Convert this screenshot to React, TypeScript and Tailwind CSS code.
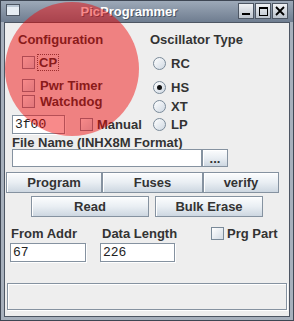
const lbl = "font-['Liberation_Sans',Arial,sans-serif] font-bold text-[13px] text-[#333] leading-[15px] whitespace-nowrap";
const mono = "font-['Liberation_Mono','DejaVu_Sans_Mono',monospace] text-[13px] text-[#222] leading-[17px]";

function Check() {
  return <span className="block w-[13px] h-[13px] shrink-0 border border-[#7a8a99] bg-linear-to-br from-white to-[#d3dbe4]" />;
}

function Radio({ on }: { on?: boolean }) {
  return (
    <span className="flex items-center justify-center w-[13px] h-[13px] shrink-0 rounded-full border border-[#7a8a99] bg-linear-to-br from-white to-[#cfd8e2]">
      {on && <span className="block w-[5px] h-[5px] rounded-full bg-[#111]" />}
    </span>
  );
}

function Btn({ text, w, h = 21 }: { text: string; w: string; h?: number }) {
  return (
    <div
      className={`${w} flex items-center justify-center border border-[#8592a0] bg-linear-to-b from-[#fcfdfe] via-[#e9eef3] to-[#cdd7e1] shadow-[inset_1px_1px_0_#fff] ${lbl}`}
      style={{ height: h }}
    >
      {text}
    </div>
  );
}

function Field({ value, w }: { value: string; w: string }) {
  return (
    <div className={`${w} h-[19px] bg-white border border-[#8592a0] shadow-[1px_1px_0_#fff] pl-[2px] ${mono}`}>{value}</div>
  );
}

export default function App() {
  return (
    <div className="relative w-[294px] h-[321px] overflow-hidden">
      <div className="flex flex-col w-full h-full border border-[#3e4653] bg-[#a7b0bc]">
        {/* title bar */}
        <div className="flex h-[21px] shrink-0 bg-linear-to-b from-[#9da9b8] to-[#6f7d90]">
          <div className="ml-[5px] mt-[3px] w-[14px] h-[12px] border border-[#4d5663] bg-[#e6edf4] shadow-[inset_0_2px_0_#b9c6d4]" />
          <div className="flex-1 text-center font-['Liberation_Sans',Arial,sans-serif] font-bold text-[13px] leading-[21px] text-white [text-shadow:1px_1px_0_#4a5565]">
            PicProgrammer
          </div>
          <div className="flex gap-[1px] mt-[2px] mr-[5px]">
            <div className="relative w-[16px] h-[16px] border border-[#4d5663] bg-linear-to-b from-[#f0f2f5] to-[#bcc4ce]">
              <span className="absolute left-[3px] bottom-[3px] w-[8px] h-[2px] bg-black" />
            </div>
            <div className="relative w-[16px] h-[16px] border border-[#4d5663] bg-linear-to-b from-[#f0f2f5] to-[#bcc4ce]">
              <span className="absolute left-[3px] top-[3px] w-[9px] h-[9px] border border-black border-t-2" />
            </div>
            <div className="w-[16px] h-[16px] border border-[#4d5663] bg-linear-to-b from-[#f0f2f5] to-[#bcc4ce] flex items-center justify-center">
              <svg width="10" height="10" viewBox="0 0 10 10">
                <path d="M1 1L9 9M9 1L1 9" stroke="#000" strokeWidth="1.8" />
              </svg>
            </div>
          </div>
        </div>

        {/* content */}
        <div className="flex-1 mx-[3px] mb-[3px] border border-[#4d5663] bg-[#eeeeee] flex flex-col">
          <div className="flex">
            <div className="w-[140px] flex flex-col">
              <div className={`mt-[9px] ml-[13px] ${lbl}`}>Configuration</div>
              <div className="mt-[7px] ml-[17px] h-[16px] flex items-center">
                <Check />
                <span className={`ml-[3px] px-[1px] outline-1 outline-dotted outline-[#555] ${lbl}`}>CP</span>
              </div>
              <div className="mt-[7px] ml-[17px] h-[16px] flex items-center gap-[5px]">
                <Check />
                <span className={lbl}>Pwr Timer</span>
              </div>
              <div className="ml-[17px] h-[16px] flex items-center gap-[5px]">
                <Check />
                <span className={lbl}>Watchdog</span>
              </div>
              <div className="mt-[6px] ml-[7px] flex items-center">
                <Field value="3f00" w="w-[53px]" />
                <span className="ml-[15px]"><Check /></span>
                <span className={`ml-[4px] ${lbl}`}>Manual</span>
              </div>
            </div>
            <div className="flex-1 flex flex-col">
              <div className={`mt-[9px] ml-[5px] ${lbl}`}>Oscillator Type</div>
              <div className="mt-[8px] ml-[8px] h-[16px] flex items-center gap-[5px]">
                <Radio />
                <span className={lbl}>RC</span>
              </div>
              <div className="mt-[8px] ml-[8px] h-[16px] flex items-center gap-[5px]">
                <Radio on />
                <span className={lbl}>HS</span>
              </div>
              <div className="mt-[3px] ml-[8px] h-[16px] flex items-center gap-[5px]">
                <Radio />
                <span className={lbl}>XT</span>
              </div>
              <div className="mt-[2px] ml-[8px] h-[16px] flex items-center gap-[5px]">
                <Radio />
                <span className={lbl}>LP</span>
              </div>
            </div>
          </div>

          <div className={`mt-[3px] ml-[7px] !leading-[12px] h-[12px] ${lbl}`}>File Name (INHX8M Format)</div>
          <div className="mt-[0px] ml-[7px] flex">
            <div className="w-[190px] h-[18px] bg-white border border-[#8592a0]" />
            <Btn text="..." w="w-[26px]" h={18} />
          </div>

          <div className="mt-[5px] ml-[1px] flex">
            <Btn text="Program" w="w-[96px]" />
            <Btn text="Fuses" w="w-[101px]" />
            <Btn text="verify" w="w-[76px]" />
          </div>
          <div className="mt-[3px] ml-[26px] flex gap-[6px]">
            <Btn text="Read" w="w-[118px]" />
            <Btn text="Bulk Erase" w="w-[108px]" />
          </div>

          <div className="mt-[9px] flex">
            <div className="ml-[5px] w-[76px] flex flex-col">
              <div className={`pl-[1px] ${lbl}`}>From Addr</div>
              <div className="mt-[2px]"><Field value="67" w="w-[76px]" /></div>
            </div>
            <div className="ml-[14px] w-[75px] flex flex-col">
              <div className={`pl-[2px] ${lbl}`}>Data Length</div>
              <div className="mt-[2px]"><Field value="226" w="w-[75px]" /></div>
            </div>
            <div className="ml-[36px] flex items-start gap-[3px]">
              <span className="mt-[1px]"><Check /></span>
              <span className={lbl}>Prg Part</span>
            </div>
          </div>

          <div className="mt-[21px] mx-[2px] h-[27px] border border-[#8592a0] bg-[#eeeeee] shadow-[inset_1px_1px_0_#fff,1px_1px_0_#fff]" />
        </div>
      </div>

      {/* translucent highlight */}
      <div className="absolute left-[5px] top-[2px] w-[134px] h-[134px] rounded-full bg-[rgba(240,0,0,0.46)] pointer-events-none" />
    </div>
  );
}
